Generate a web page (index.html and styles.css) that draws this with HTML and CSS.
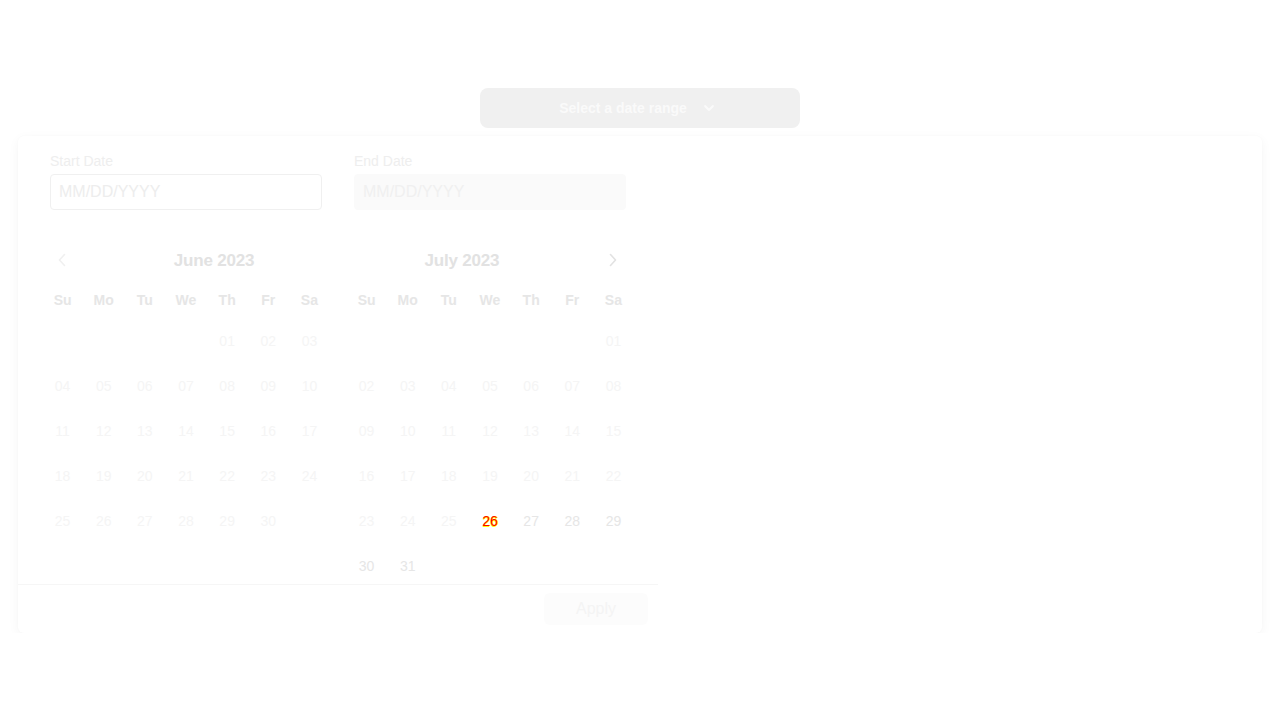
FILE: index.html
```html
<!DOCTYPE html>
<html lang="en">
<head>
<meta charset="utf-8">
<title>Date range picker</title>
<link rel="stylesheet" href="styles.css">
</head>
<body>
<div class="page">
  <button class="trigger">
    <span>Select a date range</span>
    <svg class="trigger-chev" width="12" height="8" viewBox="0 0 12 8"><path d="M2 2l4 4 4-4" fill="none" stroke="#fafafa" stroke-width="1.8" stroke-linecap="round" stroke-linejoin="round"/></svg>
  </button>
  <div class="panel">
    <div class="picker">
      <div class="inputs">
        <div class="field">
          <label class="label">Start Date</label>
          <div class="input">MM/DD/YYYY</div>
        </div>
        <div class="field">
          <label class="label">End Date</label>
          <div class="input input-disabled">MM/DD/YYYY</div>
        </div>
      </div>
      <div class="months">
        <div class="month">
          <div class="month-head">
            <span class="nav nav-prev"><svg width="8" height="14" viewBox="0 0 8 14"><path d="M6.5 1.5L1.5 7l5 5.5" fill="none" stroke="#f0f0f0" stroke-width="1.6" stroke-linecap="round" stroke-linejoin="round"/></svg></span>
            <span class="title">June 2023</span>
          </div>
          <div class="grid">
            <span class="wd">Su</span><span class="wd">Mo</span><span class="wd">Tu</span><span class="wd">We</span><span class="wd">Th</span><span class="wd">Fr</span><span class="wd">Sa</span>
            <span class="d"></span><span class="d"></span><span class="d"></span><span class="d"></span><span class="d off">01</span><span class="d off">02</span><span class="d off">03</span>
            <span class="d off">04</span><span class="d off">05</span><span class="d off">06</span><span class="d off">07</span><span class="d off">08</span><span class="d off">09</span><span class="d off">10</span>
            <span class="d off">11</span><span class="d off">12</span><span class="d off">13</span><span class="d off">14</span><span class="d off">15</span><span class="d off">16</span><span class="d off">17</span>
            <span class="d off">18</span><span class="d off">19</span><span class="d off">20</span><span class="d off">21</span><span class="d off">22</span><span class="d off">23</span><span class="d off">24</span>
            <span class="d off">25</span><span class="d off">26</span><span class="d off">27</span><span class="d off">28</span><span class="d off">29</span><span class="d off">30</span><span class="d"></span>
          </div>
        </div>
        <div class="month">
          <div class="month-head">
            <span class="title">July 2023</span>
            <span class="nav nav-next"><svg width="8" height="14" viewBox="0 0 8 14"><path d="M1.5 1.5L6.5 7l-5 5.5" fill="none" stroke="#e2e2e2" stroke-width="1.6" stroke-linecap="round" stroke-linejoin="round"/></svg></span>
          </div>
          <div class="grid">
            <span class="wd">Su</span><span class="wd">Mo</span><span class="wd">Tu</span><span class="wd">We</span><span class="wd">Th</span><span class="wd">Fr</span><span class="wd">Sa</span>
            <span class="d"></span><span class="d"></span><span class="d"></span><span class="d"></span><span class="d"></span><span class="d"></span><span class="d off">01</span>
            <span class="d off">02</span><span class="d off">03</span><span class="d off">04</span><span class="d off">05</span><span class="d off">06</span><span class="d off">07</span><span class="d off">08</span>
            <span class="d off">09</span><span class="d off">10</span><span class="d off">11</span><span class="d off">12</span><span class="d off">13</span><span class="d off">14</span><span class="d off">15</span>
            <span class="d off">16</span><span class="d off">17</span><span class="d off">18</span><span class="d off">19</span><span class="d off">20</span><span class="d off">21</span><span class="d off">22</span>
            <span class="d off">23</span><span class="d off">24</span><span class="d off">25</span><span class="d today">26</span><span class="d on">27</span><span class="d on">28</span><span class="d on">29</span>
            <span class="d on">30</span><span class="d on">31</span><span class="d"></span><span class="d"></span><span class="d"></span><span class="d"></span><span class="d"></span>
          </div>
        </div>
      </div>
      <div class="footer">
        <button class="apply">Apply</button>
      </div>
    </div>
  </div>
</div>
</body>
</html>
```
FILE: styles.css
```css
* { box-sizing: border-box; }
html, body { margin: 0; background: #ffffff; }
body { font-family: "Liberation Sans", Arial, sans-serif; }

.page {
  padding-top: 88px;
  display: flex;
  flex-direction: column;
  align-items: center;
}

.trigger {
  width: 320px;
  height: 40px;
  border: none;
  border-radius: 8px;
  background: #f0f0f0;
  color: #fafafa;
  font-family: inherit;
  font-size: 14px;
  font-weight: bold;
  display: flex;
  align-items: center;
  justify-content: center;
  gap: 16px;
  padding: 0 6px 0 0;
}
.trigger-chev { display: block; }

.panel {
  align-self: stretch;
  margin: 8px 18px 0;
  height: 497px;
  background: #ffffff;
  border-radius: 6px;
  box-shadow: 0 3px 12px rgba(0,0,0,0.045), 0 0 2px rgba(0,0,0,0.025);
}

.picker {
  width: 640px;
  height: 100%;
  display: flex;
  flex-direction: column;
}

.inputs {
  display: flex;
  gap: 32px;
  padding: 17px 32px 0;
}
.field { width: 272px; display: flex; flex-direction: column; }
.label {
  font-size: 14px;
  line-height: 16px;
  color: #eeeeee;
  margin-bottom: 5px;
}
.input {
  height: 36px;
  border: 1px solid #f0f0f0;
  border-radius: 4px;
  padding: 0 8px;
  display: flex;
  align-items: center;
  font-size: 16px;
  color: #ededed;
}
.input-disabled {
  background: #fafafa;
  border-color: #fafafa;
  color: #f0f0f0;
}

.months {
  height: 340px;
  margin-top: 34px;
  display: flex;
  gap: 16px;
  padding: 0 24px;
}
.month { width: 288px; }
.month-head {
  height: 32px;
  display: flex;
  align-items: center;
}
.nav {
  width: 56px;
  height: 32px;
  display: flex;
  align-items: center;
}
.nav-prev { justify-content: flex-start; padding-left: 16px; }
.nav-next { justify-content: flex-end; padding-right: 17px; }
.nav svg { display: block; }
.title {
  flex: 1;
  text-align: center;
  font-size: 17px;
  font-weight: bold;
  letter-spacing: -0.2px;
  color: #e2e2e2;
  padding-top: 1px;
}

.grid {
  display: grid;
  grid-template-columns: repeat(7, 1fr);
  grid-auto-rows: 45px;
  grid-template-rows: 36px;
  margin-top: 6px;
}
.wd {
  display: flex;
  align-items: center;
  justify-content: center;
  font-size: 14px;
  font-weight: bold;
  color: #e6e6e6;
}
.d {
  display: flex;
  align-items: center;
  justify-content: center;
  font-size: 14px;
  color: #f5f5f5;
}
.d.on { color: #e6e6e6; }
.d.today {
  color: #ff0000;
  text-shadow: 1px 0 0 #ffff00, 0 1px 0 #ffff00;
}

.footer {
  height: 49px;
  border-top: 1px solid #f6f6f6;
  display: flex;
  align-items: center;
  justify-content: flex-end;
  padding-right: 10px;
}
.apply {
  width: 104px;
  height: 32px;
  border: none;
  border-radius: 6px;
  background: #fcfcfc;
  color: #f4f4f4;
  font-family: inherit;
  font-size: 16px;
}
```
